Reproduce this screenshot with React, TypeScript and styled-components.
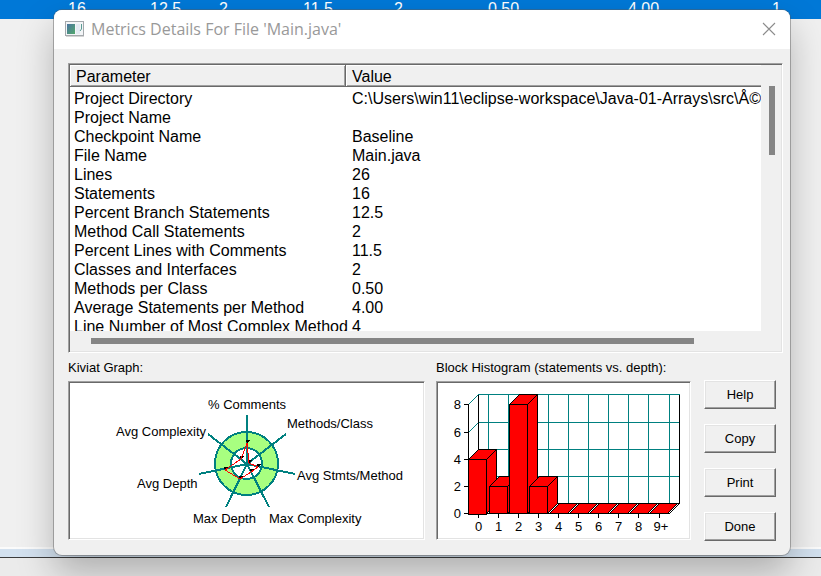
import React from "react";
import styled, { createGlobalStyle } from "styled-components";

const UI_FONT = '"Liberation Sans", Arial, sans-serif';
const TEAL = "#008080";

const GlobalStyle = createGlobalStyle`
  *, *::before, *::after { box-sizing: border-box; }
  html, body { margin: 0; padding: 0; }
  body { font-family: ${UI_FONT}; color: #000; overflow: hidden; }
`;

const Desktop = styled.main`
  position: relative;
  display: flex;
  flex-direction: column;
  min-height: 100vh;
  background: #f0f0f0;
`;

const SelectedRow = styled.div`
  display: grid;
  grid-template-columns: 82fr 69fr 84fr 91fr 94fr 140fr 144fr 49fr;
  height: 19px;
  padding-left: 68px;
  background: #0078d7;
  color: #fff;
  font-size: 16px;
  line-height: 18px;
`;

const Workspace = styled.div`
  flex: 1;
`;

const StatusBand = styled.div`
  height: 10px;
  border-top: 2px solid #fbfbfb;
  background: #d3e1ef;
`;

const Taskbar = styled.div`
  height: 19px;
  border-top: 1px solid #3c3c3c;
  background: #ebebeb;
`;

const Dialog = styled.section`
  position: absolute;
  top: 10px;
  left: 54px;
  right: 31px;
  border-radius: 8px;
  background: #f0f0f0;
  box-shadow: 0 0 0 1px rgba(90, 90, 90, 0.45), 0 18px 36px rgba(0, 0, 0, 0.26);
`;

const TitleBar = styled.header`
  display: flex;
  align-items: center;
  gap: 7px;
  height: 39px;
  padding: 0 14px 1px 11px;
  border-radius: 8px 8px 0 0;
  background: #fff;
`;

const Title = styled.h1`
  flex: 1;
  margin: 0;
  font: 400 16px/20px "Open Sans", "Noto Sans", sans-serif;
  color: #999;
  white-space: nowrap;
`;

const CloseButton = styled.button`
  display: flex;
  padding: 0;
  border: 0;
  background: none;
`;

const DialogBody = styled.div`
  padding: 14px 7px 14px 14px;
`;

const Sunken = styled.div`
  padding: 1px;
  border: 1px solid;
  border-color: #a0a0a0 #fff #fff #a0a0a0;
  box-shadow: inset 1px 1px 0 #696969, inset -1px -1px 0 #e3e3e3;
`;

const ListFrame = styled(Sunken)`
  display: grid;
  grid-template-columns: 1fr 20px;
  grid-template-rows: 266px 20px;
  background: #f0f0f0;
`;

const ListView = styled.div`
  overflow: hidden;
  background: #fff;
`;

const MetricsTable = styled.table`
  width: 100%;
  table-layout: fixed;
  border-collapse: separate;
  border-spacing: 0;
  font-size: 16px;
  line-height: 19px;
  white-space: nowrap;
`;

const HeadCell = styled.th<{ $first?: boolean }>`
  width: ${(p) => (p.$first ? "276px" : "auto")};
  height: 22px;
  padding: 1px 6px 0;
  border-bottom: 1px solid #696969;
  border-right: ${(p) => (p.$first ? "1px solid #696969" : "0")};
  background: #f0f0f0;
  box-shadow: inset 1px 1px 0 #fff,
    inset ${(p) => (p.$first ? "-1px" : "0")} -1px 0 #a0a0a0;
  font-weight: 400;
  line-height: 19px;
  text-align: left;
`;

const Cell = styled.td<{ $value?: boolean }>`
  height: 19px;
  padding: 0 0 0 ${(p) => (p.$value ? "6px" : "4px")};
`;

const TableBody = styled.tbody`
  &::before {
    content: "";
    display: block;
    height: 2px;
  }
`;

const VerticalTrack = styled.div`
  padding: 21px 0 0 8px;
`;

const HorizontalTrack = styled.div`
  padding: 7px 0 0 21px;
`;

const VerticalThumb = styled.div`
  width: 6px;
  height: 69px;
  background: #858585;
`;

const HorizontalThumb = styled.div`
  width: 90%;
  height: 6px;
  background: #858585;
`;

const Lower = styled.div`
  display: flex;
  padding-right: 7px;
`;

const ChartPanel = styled.figure<{ $share: number; $gap: number }>`
  flex: ${(p) => p.$share} 1 0;
  min-width: 0;
  margin: 0 ${(p) => p.$gap}px 0 0;
`;

const Caption = styled.figcaption`
  padding-top: 2px;
  font-size: 13px;
  line-height: 26px;
  white-space: nowrap;
`;

const ChartFrame = styled(Sunken)`
  background: #fff;
`;

const Chart = styled.svg`
  display: block;
  width: 100%;
  height: 155px;
  font: 13px ${UI_FONT};
`;

const Actions = styled.div`
  display: flex;
  flex-direction: column;
  gap: 15px;
  width: 72px;
  padding-top: 27px;
`;

const ActionButton = styled.button`
  height: 29px;
  padding: 0;
  border: 1px solid;
  border-color: #fff #696969 #696969 #fff;
  background: #f0f0f0;
  box-shadow: inset -1px -1px 0 #a0a0a0, inset 1px 1px 0 #e3e3e3;
  font: 13px ${UI_FONT};
  color: #000;
`;

const selectedValues = ["16", "12.5", "2", "11.5", "2", "0.50", "4.00", "1"];

const metrics: [string, string][] = [
  ["Project Directory", "C:\\Users\\win11\\eclipse-workspace\\Java-01-Arrays\\src\\Å©·"],
  ["Project Name", ""],
  ["Checkpoint Name", "Baseline"],
  ["File Name", "Main.java"],
  ["Lines", "26"],
  ["Statements", "16"],
  ["Percent Branch Statements", "12.5"],
  ["Method Call Statements", "2"],
  ["Percent Lines with Comments", "11.5"],
  ["Classes and Interfaces", "2"],
  ["Methods per Class", "0.50"],
  ["Average Statements per Method", "4.00"],
  ["Line Number of Most Complex Method", "4"],
];

const spokes = [
  [177, 32], [216, 51], [225, 91], [199, 124], [156, 124], [129, 91], [138, 51],
];

const kiviatLabels: [string, number, number][] = [
  ["% Comments", 138, 26],
  ["Methods/Class", 217, 45],
  ["Avg Stmts/Method", 227, 97],
  ["Max Complexity", 199, 140],
  ["Max Depth", 123, 140],
  ["Avg Depth", 67, 105],
  ["Avg Complexity", 46, 53],
];

const kiviatPoints = [
  [177, 59], [179, 79], [188, 83], [181, 88], [170, 95], [155, 86], [171, 75],
];

function KiviatChart() {
  return (
    <Chart viewBox="0 0 353 155" role="img" aria-label="Kiviat graph">
      <g shapeRendering="crispEdges">
        <circle cx="176.5" cy="80.5" r="31.5" fill="#a8ff80" stroke={TEAL} strokeWidth="2" />
        <circle cx="176.5" cy="80.5" r="15.5" fill="#fff" stroke={TEAL} strokeWidth="2" />
        {spokes.map(([x, y]) => (
          <line key={`${x}-${y}`} x1="177" y1="81" x2={x} y2={y} stroke={TEAL} strokeWidth="2" />
        ))}
        {kiviatPoints.map(([x, y]) => (
          <path key={`${x}-${y}`} d={`M${x - 1} ${y - 2}h4v1h-1v1h-1v1h-1v-1h-1z`} />
        ))}
        <polygon
          points={kiviatPoints.map(([x, y]) => `${x},${y + 1}`).join(" ")}
          fill="none"
          stroke="#f00"
        />
      </g>
      {kiviatLabels.map(([label, x, y]) => (
        <text key={label} x={x} y={y}>{label}</text>
      ))}
    </Chart>
  );
}

const levels = [
  { label: "8", y: 21.5 },
  { label: "6", y: 49.5 },
  { label: "4", y: 76.5 },
  { label: "2", y: 103.5 },
  { label: "0", y: 130.5 },
];

const bars = [
  { x: 30.5, top: 76.5, bottom: 131.5 },
  { x: 51.5, top: 103.5, bottom: 130.5 },
  { x: 71.5, top: 21.5, bottom: 130.5 },
  { x: 91.5, top: 103.5, bottom: 130.5 },
];

const depths = ["0", "1", "2", "3", "4", "5", "6", "7", "8", "9+"];
const tickX = (i: number) => (i === 9 ? 221.5 : 40.5 + 20 * i);

function BlockHistogram() {
  return (
    <Chart viewBox="0 0 251 155" role="img" aria-label="Block histogram of statements by depth">
      <g shapeRendering="crispEdges" fill="none" stroke={TEAL}>
        {levels.slice(0, 4).map(({ y }) => (
          <path key={y} d={`M30.5 ${y}L40.5 ${y - 10}H241.5`} />
        ))}
        {depths.map((d, i) => (
          <path key={d} d={`M${i === 9 ? 231.5 : 50.5 + 20 * i} 11.5V120.5`} />
        ))}
      </g>
      <g shapeRendering="crispEdges" fill="none" stroke="#000">
        <path d="M30.5 21.5V130.5M40.5 11.5V120.5H241.5V11.5M30.5 130.5H231.5L241.5 120.5" />
        {levels.map(({ y }) => <path key={y} d={`M26 ${y}H31`} />)}
        {depths.map((d, i) => <path key={d} d={`M${tickX(i)} 130V135`} />)}
      </g>
      <g fill="#f00" stroke="#000" shapeRendering="crispEdges">
        {bars.map(({ x, top, bottom }) => (
          <g key={x}>
            <path d={`M${x} ${top}l10 -10h18l-10 10z`} />
            <path d={`M${x + 18} ${top}l10 -10V120.5L${x + 18} 130.5z`} />
            <path d={`M${x} ${top}h18V${bottom}h-18z`} />
          </g>
        ))}
        {[0, 1, 2, 3, 4, 5].map((i) => (
          <path key={i} d={`M${111.5 + 20 * i} 130.5l10 -10h18l-10 10z`} />
        ))}
      </g>
      {levels.map(({ label, y }) => (
        <text key={label} x="23" y={y + 4.5} textAnchor="end">{label}</text>
      ))}
      {depths.map((d, i) => (
        <text key={d} x={i === 9 ? 223 : tickX(i)} y="148" textAnchor="middle">{d}</text>
      ))}
    </Chart>
  );
}

function AppIcon() {
  return (
    <svg width="19" height="17" viewBox="0 0 19 17" aria-hidden="true">
      <defs>
        <linearGradient id="screen" x1="0" y1="0" x2="1" y2="1">
          <stop offset="0" stopColor="#4a74a0" />
          <stop offset="1" stopColor="#52a86c" />
        </linearGradient>
      </defs>
      <rect x="0.5" y="0.5" width="18" height="14" fill="#f3f5f7" stroke="#a4a8ac" />
      <path d="M1 15.5H19" stroke="#d4d4d4" />
      <rect x="2" y="3" width="8" height="10" fill="url(#screen)" />
      <rect x="11" y="3" width="4" height="10" fill="#e3eaf2" />
      <path d="M16.5 3V8L15 10" stroke="#5b9c94" fill="none" />
    </svg>
  );
}

export default function App() {
  return (
    <Desktop>
      <GlobalStyle />
      <SelectedRow>
        {selectedValues.map((value, i) => <span key={i}>{value}</span>)}
      </SelectedRow>
      <Workspace />
      <StatusBand />
      <Taskbar />
      <Dialog role="dialog" aria-labelledby="dialog-title">
        <TitleBar>
          <AppIcon />
          <Title id="dialog-title">Metrics Details For File 'Main.java'</Title>
          <CloseButton type="button" aria-label="Close">
            <svg width="14" height="14" viewBox="0 0 14 14" aria-hidden="true">
              <path d="M1 1L13 13M13 1L1 13" stroke="#8c8c8c" strokeWidth="1.1" />
            </svg>
          </CloseButton>
        </TitleBar>
        <DialogBody>
          <ListFrame>
            <ListView>
              <MetricsTable>
                <thead>
                  <tr>
                    <HeadCell $first scope="col">Parameter</HeadCell>
                    <HeadCell scope="col">Value</HeadCell>
                  </tr>
                </thead>
                <TableBody>
                  {metrics.map(([name, value]) => (
                    <tr key={name}>
                      <Cell>{name}</Cell>
                      <Cell $value>{value}</Cell>
                    </tr>
                  ))}
                </TableBody>
              </MetricsTable>
            </ListView>
            <VerticalTrack><VerticalThumb /></VerticalTrack>
            <HorizontalTrack><HorizontalThumb /></HorizontalTrack>
          </ListFrame>
          <Lower>
            <ChartPanel $share={357} $gap={11}>
              <Caption>Kiviat Graph:</Caption>
              <ChartFrame><KiviatChart /></ChartFrame>
            </ChartPanel>
            <ChartPanel $share={255} $gap={13}>
              <Caption>Block Histogram (statements vs. depth):</Caption>
              <ChartFrame><BlockHistogram /></ChartFrame>
            </ChartPanel>
            <Actions>
              {["Help", "Copy", "Print", "Done"].map((label) => (
                <ActionButton key={label} type="button">{label}</ActionButton>
              ))}
            </Actions>
          </Lower>
        </DialogBody>
      </Dialog>
    </Desktop>
  );
}
